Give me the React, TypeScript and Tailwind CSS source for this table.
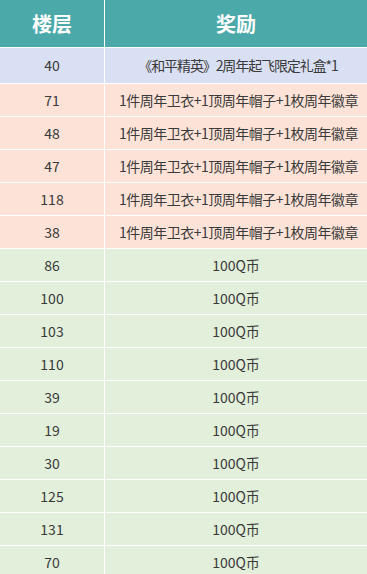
const GIFT = '1件周年卫衣+1顶周年帽子+1枚周年徽章';

const rows: Array<{ floor: string; reward: string; tone: 'blue' | 'peach' | 'green' }> = [
  { floor: '40', reward: '《和平精英》2周年起飞限定礼盒*1', tone: 'blue' },
  { floor: '71', reward: GIFT, tone: 'peach' },
  { floor: '48', reward: GIFT, tone: 'peach' },
  { floor: '47', reward: GIFT, tone: 'peach' },
  { floor: '118', reward: GIFT, tone: 'peach' },
  { floor: '38', reward: GIFT, tone: 'peach' },
  { floor: '86', reward: '100Q币', tone: 'green' },
  { floor: '100', reward: '100Q币', tone: 'green' },
  { floor: '103', reward: '100Q币', tone: 'green' },
  { floor: '110', reward: '100Q币', tone: 'green' },
  { floor: '39', reward: '100Q币', tone: 'green' },
  { floor: '19', reward: '100Q币', tone: 'green' },
  { floor: '30', reward: '100Q币', tone: 'green' },
  { floor: '125', reward: '100Q币', tone: 'green' },
  { floor: '131', reward: '100Q币', tone: 'green' },
  { floor: '70', reward: '100Q币', tone: 'green' },
];

const toneBg = {
  blue: 'bg-[#dae0f3]',
  peach: 'bg-[#fde3d7]',
  green: 'bg-[#e2efda]',
};

export default function App() {
  return (
    <div className="w-[367px] h-[574px] overflow-hidden bg-white font-['Microsoft_YaHei','Noto_Sans_CJK_SC',sans-serif]">
      <div className="grid grid-cols-[104px_1fr] gap-px bg-white">
        {/* header */}
        <div className="h-[47px] bg-[#4ba9a9] flex items-center justify-center text-white text-[20px] font-bold">
          楼层
        </div>
        <div className="h-[47px] bg-[#4ba9a9] flex items-center justify-center text-white text-[20px] font-bold">
          奖励
        </div>

        {rows.map((r, i) => (
          <div key={i} className="contents">
            <div
              className={`${i === 0 ? 'h-[35px]' : 'h-[32px]'} ${toneBg[r.tone]} flex items-center justify-center text-[14px] text-[#3a3a3a]`}
            >
              {r.floor}
            </div>
            <div
              className={`${i === 0 ? 'h-[35px] tracking-[-1.1px] pl-[4px]' : r.reward === GIFT ? 'h-[32px] tracking-[-0.5px] pl-[5px]' : 'h-[32px]'} ${toneBg[r.tone]} flex items-center justify-center text-[14px] text-[#3a3a3a] whitespace-nowrap`}
            >
              {r.reward}
            </div>
          </div>
        ))}
      </div>
    </div>
  );
}
